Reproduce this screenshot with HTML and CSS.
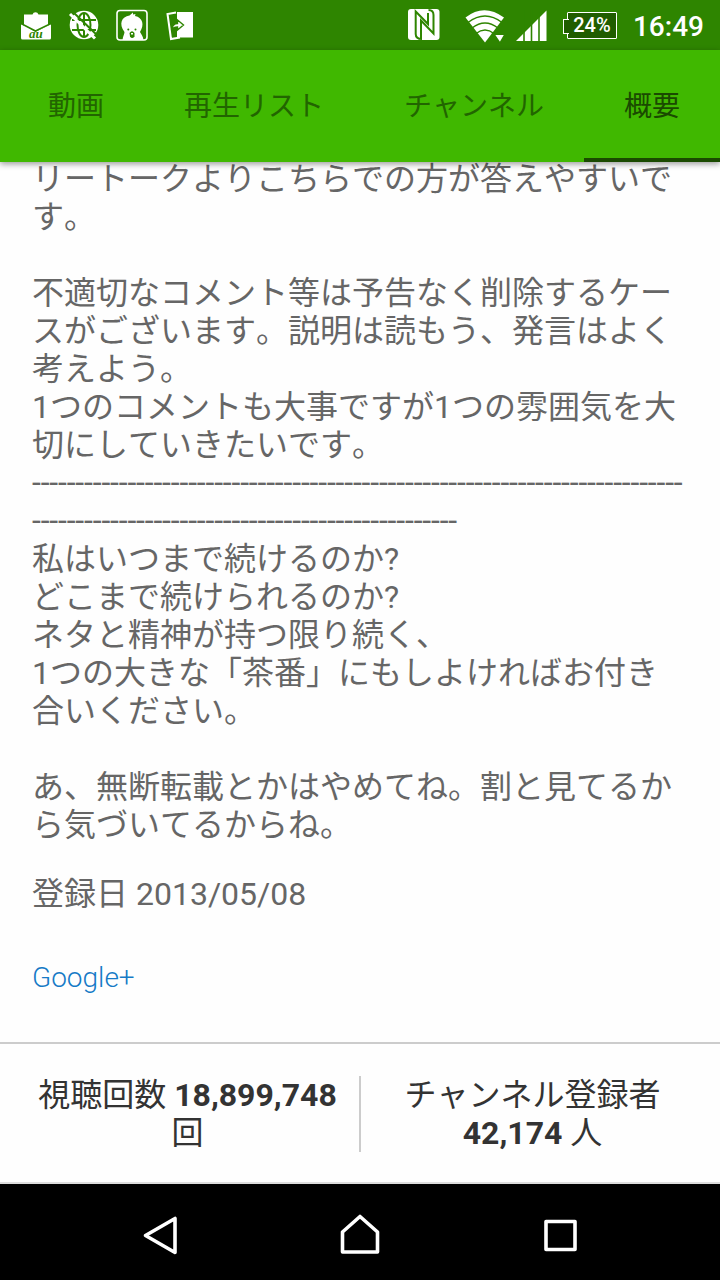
FILE: index.html
```html
<!DOCTYPE html>
<html lang="ja">
<head>
    <meta charset="UTF-8">
    <meta name="viewport" content="width=device-width, initial-scale=1.0">
    <title>概要</title>
    <link rel="stylesheet" href="styles.css">
</head>
<body>
    <div class="status-bar">
        <svg class="status-icons" width="200" height="50" viewBox="0 0 200 50">
            <!-- mail -->
            <path class="fill" d="M24 26V14.500h8.500a3.200 3.600 0 0 1 6 0H48v11.500l-12 5z"/>
            <path class="fill" d="M21 24l14.500 8L51 24v14q0 1.500-1.500 1.500h-27Q21 39.500 21 38z"/>
            <path class="cut thin" d="M21 23.500l14.500 7.500L51 23.500"/>
            <text class="au" x="29" y="37.500">au</text>
            <!-- globe with slash -->
            <circle class="fill" cx="84" cy="25" r="14.300"/>
            <g class="globe">
                <ellipse cx="84" cy="25" rx="6.500" ry="12"/>
                <path d="M72 20h24M72 30h24M84 13v24"/>
            </g>
            <path class="cut" d="M73 12l25 24"/>
            <path class="slash" d="M70 14l25 24.500"/>
            <!-- bird -->
            <rect class="frame" x="117" y="10.500" width="30" height="29.500" rx="3"/>
            <path class="fill" d="M122.500 40c.5-4 2-6 2-8-6-8-3-15.500 5-16.500l3.500-3 0 2 2.500-.5-.5 2c8 1.500 9.500 9 5 16 1 2 3 4 3.500 8z"/>
            <circle class="dark" cx="128.300" cy="29.500" r="1"/>
            <circle class="dark" cx="135.500" cy="29.500" r="1"/>
            <path class="dark" d="M129.500 33q2.500-3.500 5 0v3.500q-2.500 3-4.500 0z"/>
            <path class="fill" d="M131 33h2v1.500h-2z"/>
            <!-- share cards -->
            <path class="fill" d="M177 12h16v25.500h-16z"/>
            <path class="card" d="M176 12.500l-8.500 1.500 3.500 25 9-1.500"/>
            <path class="arrow" d="M171.500 30q1-6.500 6-6.500v-3.500l6 5-6 5v-3q-4 0-6 3z"/>
        </svg>
        <div class="status-right">
            <svg width="156" height="50" viewBox="0 0 156 50">
                <!-- nfc -->
                <rect class="fill" x="1" y="9" width="31.500" height="31" rx="3"/>
                <path class="nfc" d="M15 39q-6.300 0-6.300-5V11.500L21 24V13M14 39V20.500L26.500 33.500V15q0-5-5-5"/>
                <!-- wifi -->
                <path class="fill" d="M58.500 17.500Q77 3 97 17.500L78 42.500z"/>
                <path class="cut thin" d="M61 22.500q17-13 34 0M65 28q13-10 26 0M69 33.500q9-7 18 0"/>
                <path class="fill badge" d="M86.500 34h12L93 43.500z"/>
                <!-- signal -->
                <path class="fill" d="M109 41l30.500-30.500V41z"/>
                <path class="bars" d="M117 10v32M124.500 10v32M132 10v32"/>
            </svg>
            <div class="battery">24%</div>
            <div class="clock">16:49</div>
        </div>
    </div>

    <nav class="tabs">
        <a class="tab">動画</a>
        <a class="tab">再生リスト</a>
        <a class="tab">チャンネル</a>
        <a class="tab active">概要</a>
    </nav>

    <main class="about">
        <p class="description">リートークよりこちらでの方が答えやすいで<br>
            す。<br>
            <br>
            不適切なコメント等は予告なく削除するケー<br>
            スがございます。説明は読もう、発言はよく<br>
            考えよう。<br>
            1つのコメントも大事ですが1つの雰囲気を大<br>
            切にしていきたいです。<br>
            <span class="rule">---------------------------------------------------------------------------</span><br>
            <span class="rule">-------------------------------------------------</span><br>
            私はいつまで続けるのか?<br>
            どこまで続けられるのか?<br>
            ネタと精神が持つ限り続く、<br>
            1つの大きな「茶番」にもしよければお付き<br>
            合いください。<br>
            <br>
            あ、無断転載とかはやめてね。割と見てるか<br>
            ら気づいてるからね。</p>
        <p class="joined">登録日 2013/05/08</p>
        <a class="link">Google+</a>
    </main>

    <section class="stats">
        <div class="stat">視聴回数 <b>18,899,748</b><br>回</div>
        <div class="stat">チャンネル登録者<br><b>42,174</b> 人</div>
    </section>

    <footer class="nav-bar">
        <svg width="48" height="48" viewBox="0 0 48 48"><path d="M39 10.500v34L9.500 27.500z" transform="translate(0 -2)"/></svg>
        <svg width="48" height="48" viewBox="0 0 48 48"><path d="M6.500 42V22L24 6.500 41.500 22v20z"/></svg>
        <svg width="48" height="48" viewBox="0 0 48 48"><path d="M10 11.500h29v28H10z"/></svg>
    </footer>
</body>
</html>
```
FILE: styles.css
```css
* {
    box-sizing: border-box;
}

body {
    width: 720px;
    height: 1280px;
    margin: 0;
    display: flex;
    flex-direction: column;
    overflow: hidden;
    background-color: #fefefe;
    color: #666;
    font-family: Roboto, "Noto Sans CJK JP", sans-serif;
    font-size: 32px;
    font-kerning: none;
    line-height: 38px;
}

p {
    margin: 0;
}

/* status bar */
.status-bar {
    flex: none;
    height: 50px;
    display: flex;
    justify-content: space-between;
    background-color: #2e8500;
    color: white;
}

.status-right {
    display: flex;
    align-items: center;
    padding-right: 16px;
}

.fill {
    fill: white;
}

.dark {
    fill: #2e8500;
}

.cut {
    fill: none;
    stroke: #2e8500;
    stroke-width: 2;
}

.thin {
    stroke-width: 1.5;
}

.au {
    fill: #2e8500;
    font: italic bold 13px "Liberation Serif", serif;
}

.globe {
    fill: none;
    stroke: #2e8500;
    stroke-width: 2;
}

.slash {
    stroke: white;
    stroke-width: 3;
}

.frame {
    fill: none;
    stroke: white;
    stroke-width: 1.6;
}

.card {
    fill: none;
    stroke: white;
    stroke-width: 2;
}

.arrow {
    fill: white;
    stroke: #2e8500;
    stroke-width: 1.4;
}

.nfc {
    fill: none;
    stroke: #2e8500;
    stroke-width: 2;
}

.badge {
    stroke: #2e8500;
    stroke-width: 2;
}

.bars {
    stroke: #2e8500;
    stroke-width: 1.6;
}

.battery {
    position: relative;
    width: 50px;
    height: 27px;
    margin-left: 4px;
    border: 1.5px solid white;
    border-radius: 1px;
    background-color: #205d00;
    font-size: 20px;
    font-weight: 500;
    line-height: 25px;
    text-align: center;
}

.battery::before {
    content: "";
    position: absolute;
    left: -5px;
    top: 6px;
    width: 5px;
    height: 13px;
    border: 1px solid white;
    border-right: none;
    background-color: #205d00;
}

.clock {
    margin-left: 16px;
    padding-top: 3px;
    font-size: 28px;
    font-weight: 500;
}

/* tabs */
.tabs {
    position: relative;
    z-index: 1;
    flex: none;
    height: 112px;
    display: flex;
    padding-left: 8px;
    background-color: #40b800;
    box-shadow: 0 2px 6px rgba(0, 0, 0, 0.4);
}

.tab {
    padding: 0 40px;
    color: #226500;
    font-size: 28px;
    line-height: 113px;
    white-space: nowrap;
}

.tab.active {
    height: 112px;
    border-bottom: 4px solid #1a4a00;
    color: #1a4a00;
}

/* channel description */
.about {
    flex: none;
    height: 880px;
    padding: 0 32px;
}

.description {
    margin-top: -2px;
    white-space: nowrap;
}

.rule {
    letter-spacing: -0.17px;
    line-height: 36px;
    vertical-align: 1px;
}

.joined {
    margin-top: 31px;
}

.link {
    display: block;
    margin-top: 46px;
    color: #167ac6;
    font-size: 28px;
    font-weight: 300;
}

/* counters */
.stats {
    flex: none;
    height: 142px;
    display: flex;
    padding: 32px 0;
    border-top: 2px solid #ccc;
    border-bottom: 2px solid #ddd;
    color: #333;
}

.stat {
    width: 359px;
    height: 76px;
    padding-right: 16px;
    text-align: center;
}

.stat:first-child {
    width: 361px;
    padding-left: 16px;
    padding-right: 0;
    border-right: 2px solid #ccc;
}

/* navigation bar */
.nav-bar {
    flex: none;
    height: 96px;
    display: flex;
    justify-content: center;
    gap: 152px;
    padding-top: 26px;
    background-color: black;
}

.nav-bar path {
    fill: none;
    stroke: white;
    stroke-width: 3.6;
    stroke-linejoin: round;
}
```
